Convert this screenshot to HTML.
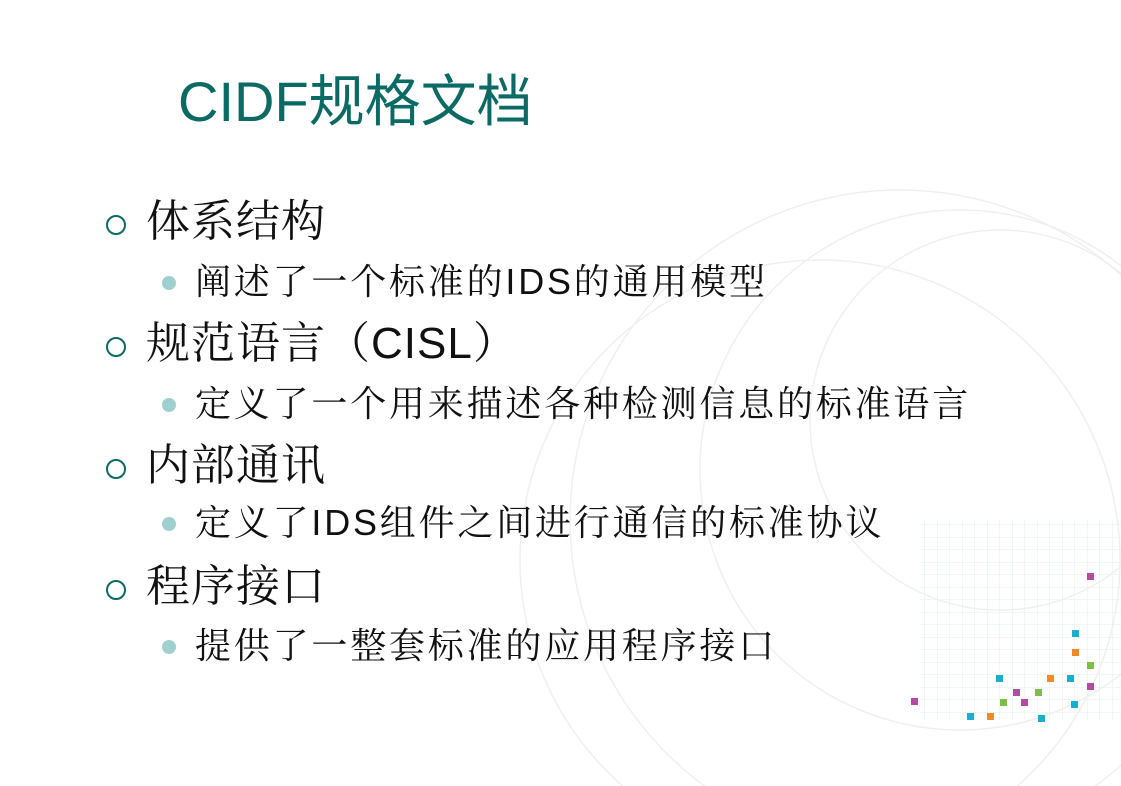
<!DOCTYPE html>
<html><head><meta charset="utf-8"><style>
html,body{margin:0;width:1121px;height:786px;overflow:hidden;}
body{background:#fff;position:relative;font-family:"Liberation Sans","Noto Serif CJK SC",serif;}
.t{position:absolute;left:178px;top:71px;font-size:56px;line-height:1.1;color:#0b6b64;font-family:"Liberation Sans","Noto Sans CJK SC",sans-serif;white-space:nowrap;}
.l1{position:absolute;left:146px;font-size:44px;letter-spacing:1px;color:#111;white-space:nowrap;line-height:1;}
.l1:before{content:"";position:absolute;left:-40px;top:15px;width:16px;height:16px;border:2.5px solid #0b6b64;border-radius:50%;}
.l2{position:absolute;left:195px;font-size:36px;letter-spacing:2.8px;color:#111;white-space:nowrap;line-height:1;}
.l2:before{content:"";position:absolute;left:-33px;top:12px;width:14px;height:14px;background:#9fd0cf;border-radius:50%;}
.sq{position:absolute;width:7px;height:7px;}
</style></head><body>
<svg style="position:absolute;left:0;top:0;display:block" width="1121" height="786">
<defs><pattern id="g" width="12.5" height="12.5" patternUnits="userSpaceOnUse"><path d="M12.5 0V12.5H0" fill="none" stroke="#dcebec" stroke-width="1"/></pattern></defs>
<rect x="920" y="520" width="201" height="200" fill="url(#g)" opacity="0.9"/>
<g fill="none" stroke="#efefef" stroke-width="1.5">
<circle cx="900" cy="520" r="330"/><circle cx="960" cy="470" r="260"/><circle cx="1000" cy="420" r="190"/><circle cx="820" cy="560" r="300"/>
</g>
</svg>
<div class="t">CIDF规格文档</div>
<div class="l1" style="top:200px">体系结构</div>
<div class="l2" style="top:264px">阐述了一个标准的IDS的通用模型</div>
<div class="l1" style="top:322px">规范语言（CISL）</div>
<div class="l2" style="top:386px">定义了一个用来描述各种检测信息的标准语言</div>
<div class="l1" style="top:444px">内部通讯</div>
<div class="l2" style="top:505px">定义了IDS组件之间进行通信的标准协议</div>
<div class="l1" style="top:565px">程序接口</div>
<div class="l2" style="top:628px">提供了一整套标准的应用程序接口</div>
<div class="sq" style="left:1087px;top:573px;background:#b04d9e"></div>
<div class="sq" style="left:1072px;top:630px;background:#1aaecf"></div>
<div class="sq" style="left:1072px;top:649px;background:#f08a24"></div>
<div class="sq" style="left:1087px;top:662px;background:#7cbf44"></div>
<div class="sq" style="left:996px;top:675px;background:#1aaecf"></div>
<div class="sq" style="left:1047px;top:675px;background:#f08a24"></div>
<div class="sq" style="left:1067px;top:675px;background:#1aaecf"></div>
<div class="sq" style="left:1087px;top:683px;background:#b04d9e"></div>
<div class="sq" style="left:1013px;top:689px;background:#b04d9e"></div>
<div class="sq" style="left:1035px;top:689px;background:#7cbf44"></div>
<div class="sq" style="left:1000px;top:699px;background:#7cbf44"></div>
<div class="sq" style="left:1021px;top:699px;background:#b04d9e"></div>
<div class="sq" style="left:1071px;top:701px;background:#1aaecf"></div>
<div class="sq" style="left:911px;top:698px;background:#b04d9e"></div>
<div class="sq" style="left:967px;top:713px;background:#1aaecf"></div>
<div class="sq" style="left:987px;top:713px;background:#f08a24"></div>
<div class="sq" style="left:1038px;top:715px;background:#1aaecf"></div>
</body></html>
